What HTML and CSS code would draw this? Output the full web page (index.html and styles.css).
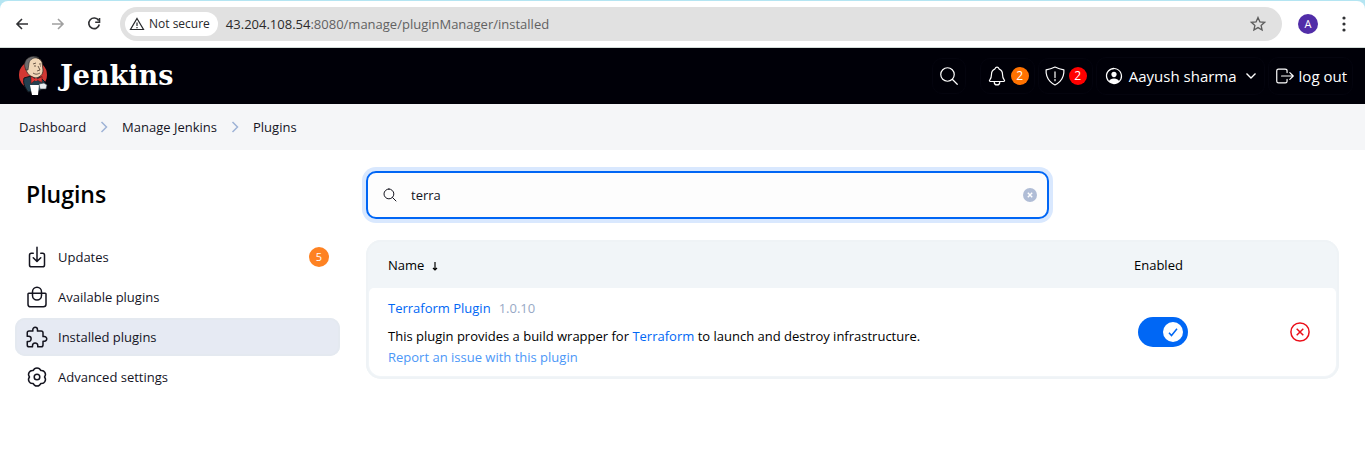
FILE: index.html
```html
<!DOCTYPE html>
<html lang="en">
<head>
<meta charset="utf-8">
<title>Plugins - Jenkins</title>
<link rel="stylesheet" href="styles.css">
</head>
<body>
<div class="browser">
  <div class="toolbar">
    <button class="nav-btn" aria-label="Back"><svg viewBox="0 0 16 16"><path d="M14 8H3M8 3L3 8l5 5"/></svg></button>
    <button class="nav-btn nav-off" aria-label="Forward"><svg viewBox="0 0 16 16"><path d="M2 8h11M8 3l5 5-5 5"/></svg></button>
    <button class="nav-btn" aria-label="Reload"><svg viewBox="0 0 16 16"><path d="M12.600 4.500A5.300 5.300 0 1 0 13.300 8.500M13.500 2v4.300H9.200"/></svg></button>
    <div class="address">
      <button class="secure"><svg viewBox="0 0 16 16"><path d="M8 2.500L14.500 13.500h-13zM8 6.500v3.500M8 11v1.300"/></svg>Not secure</button>
      <div class="url" role="textbox" aria-label="Address" contenteditable="true" spellcheck="false"><span class="host">43.204.108.54</span>:8080/manage/pluginManager/installed</div>
      <button class="star" aria-label="Bookmark"><svg viewBox="0 0 16 16"><path d="M8 1.500l1.900 4.300 4.700.5-3.500 3.100 1 4.600L8 11.600 3.900 14l1-4.600L1.400 6.300l4.700-.5z"/></svg></button>
    </div>
    <button class="profile" aria-label="Profile">A</button>
    <button class="more" aria-label="Browser menu"><svg viewBox="0 0 4 16"><circle cx="2" cy="2" r="1.600"/><circle cx="2" cy="8" r="1.600"/><circle cx="2" cy="14" r="1.600"/></svg></button>
  </div>
</div>

<header class="header">
  <a class="brand" href="#">
    <svg class="butler" viewBox="0 0 30 40">
      <ellipse cx="15" cy="19" rx="14" ry="14" fill="#d33833"/>
      <path d="M6 22l7-2 9 1 5 5-1 6-5 3-11 1-3-5c-1-3-2-5-1-9z" fill="#24404f" stroke="#10141a"/>
      <path d="M8 5c3-5 13-5 16 1l1 8c0 5-3 7-7 8-5-1-8-3-10-8z" fill="#f0d6b7" stroke="#33271f" stroke-width=".8"/>
      <path d="M8 14c-2-4-2-8 1-11 4-4 10-3 12-1-5-1-9 1-10 5l-1 7z" fill="#6d6b6d" stroke="#252525" stroke-width=".6"/>
      <path d="M15 8l3-1M21 8l2 0M16 10h2M22 10h1M20 10l2 4-3 1M15 17c3 2 5 1 7 0" fill="none" stroke="#49372c" stroke-width=".8"/>
      <path d="M13 20l5 3.500-5 4zM18 23.500l6-3v6z" fill="#e13935" stroke="#50191b" stroke-width=".6"/>
      <circle cx="18" cy="23.500" r="1.500" fill="#e13935"/>
      <path d="M12 29h9l-1 10h-6z" fill="#fff"/>
      <path d="M21 28l5-1 3 2-1 4h-6z" fill="#e9edf0" stroke="#35414a" stroke-width=".6"/>
    </svg>
    <span>Jenkins</span>
  </a>
  <button class="head-btn head-search" aria-label="Search"><svg class="icon line" viewBox="0 0 512 512"><path d="M221.090 64a157.090 157.090 0 1 0 157.090 157.090A157.100 157.100 0 0 0 221.090 64zM338.290 338.290L448 448"/></svg></button>
  <button class="head-btn" aria-label="Notifications: 2"><svg class="icon line" viewBox="0 0 512 512"><path d="M427.680 351.430C402 320 383.870 304 383.870 217.350 383.870 138 343.350 109.730 310 96c-4.430-1.820-8.600-6-9.950-10.550C294.200 65.540 277.800 48 256 48s-38.210 17.550-44 37.470c-1.350 4.600-5.520 8.710-9.950 10.530-33.390 13.750-73.870 41.920-73.870 121.350C128.130 304 110 320 84.320 351.430 73.680 364.450 83 384 101.610 384h308.880c18.510 0 27.770-19.610 17.190-32.570zM320 384v16a64 64 0 0 1-128 0v-16"/></svg><span class="count orange">2</span></button>
  <button class="head-btn" aria-label="Security warnings: 2"><svg class="icon line" viewBox="0 0 512 512"><path d="M463.100 112.370C373.680 96.330 336.710 84.450 256 48c-80.710 36.450-117.680 48.330-207.100 64.370C32.700 369.130 240.580 457.790 256 464c15.420-6.210 223.300-94.870 207.100-351.630zM256 160v130M256 335v30"/></svg><span class="count red">2</span></button>
  <a class="head-btn user" href="#"><svg class="icon solid" viewBox="0 0 512 512"><path d="M258.900 48C141.920 46.420 46.420 141.920 48 258.900c1.560 112.190 92.910 203.540 205.100 205.100 117 1.600 212.480-93.900 210.880-210.880C462.440 140.910 371.090 49.560 258.900 48zM385.320 375.250a4 4 0 0 1-6.140-.32 124.270 124.270 0 0 0-32.350-29.590C321.370 329 289.110 320 256 320s-65.370 9-90.830 25.340a124.240 124.240 0 0 0-32.350 29.580 4 4 0 0 1-6.140.32A175.320 175.320 0 0 1 80 259c-1.630-97.310 78.220-178.760 175.570-179S432 158.810 432 256a175.320 175.320 0 0 1-46.680 119.250z"/><path d="M256 144c-19.720 0-37.550 7.390-50.220 20.820s-19 32-17.570 51.930C191.110 256 221.520 288 256 288s64.830-32 67.790-71.240c1.480-19.740-4.800-38.140-17.680-51.820C293.390 151.440 275.590 144 256 144z"/></svg>Aayush sharma<svg class="chev" viewBox="0 0 12 12"><path d="M1.500 3.500L6 8l4.500-4.500"/></svg></a>
  <a class="head-btn logout" href="#"><svg class="icon line" viewBox="0 0 512 512"><path d="M304 336v40a40 40 0 0 1-40 40H104a40 40 0 0 1-40-40V136a40 40 0 0 1 40-40h152c22.090 0 48 17.910 48 40v40M368 336l80-80-80-80M176 256h256"/></svg>log out</a>
</header>

<nav class="crumbs" aria-label="Breadcrumb">
  <a href="#">Dashboard</a>
  <svg viewBox="0 0 8 12"><path d="M1.500 1l5 5-5 5"/></svg>
  <a href="#">Manage Jenkins</a>
  <svg viewBox="0 0 8 12"><path d="M1.500 1l5 5-5 5"/></svg>
  <a href="#">Plugins</a>
</nav>

<div class="page">
  <aside class="side">
    <h1>Plugins</h1>
    <nav class="tasks" aria-label="Plugins">
      <a class="task" href="#"><svg class="icon line" viewBox="0 0 512 512"><path d="M336 176h40a40 40 0 0 1 40 40v208a40 40 0 0 1-40 40H136a40 40 0 0 1-40-40V216a40 40 0 0 1 40-40h40M176 272l80 80 80-80M256 48v288"/></svg><span>Updates</span><span class="updates">5</span></a>
      <a class="task" href="#"><svg class="icon line" viewBox="0 0 512 512"><path d="M80 176a16 16 0 0 0-16 16v216c0 30.240 25.760 56 56 56h272c30.240 0 56-24.510 56-54.750V192a16 16 0 0 0-16-16zM160 176v-32a96 96 0 0 1 192 0v32M160 176v48a96 96 0 0 0 192 0v-48"/></svg><span>Available plugins</span></a>
      <a class="task active" href="#" aria-current="page"><svg class="icon line" viewBox="0 0 512 512"><path d="M413.660 246.100H386a2 2 0 0 1-2-2v-77.240A38.860 38.860 0 0 0 345.140 128H267.900a2 2 0 0 1-2-2V98.340c0-27.140-21.500-49.860-48.640-50.330a49.530 49.530 0 0 0-50.400 49.510V126a2 2 0 0 1-2 2H87.620A39.740 39.740 0 0 0 48 167.620V238a2 2 0 0 0 2 2h26.910c29.370 0 53.680 25.480 54.090 54.850.42 29.870-23.510 57.150-53.290 57.150H50a2 2 0 0 0-2 2v70.380A39.740 39.740 0 0 0 87.620 464H158a2 2 0 0 0 2-2v-20.930c0-30.280 24.750-56.350 55-57.060 30.100-.7 57 20.310 57 50.280V462a2 2 0 0 0 2 2h71.140A38.860 38.860 0 0 0 384 425.140v-78a2 2 0 0 1 2-2h28.480c27.630 0 49.520-22.670 49.520-50.400s-23.200-48.640-50.340-48.640z"/></svg><span>Installed plugins</span></a>
      <a class="task" href="#"><svg class="icon gear" viewBox="-2 -2 24 24"><path d="M6.250 3.500A4 4 0 0 1 13.750 3.500A4 4 0 0 1 17.500 10A4 4 0 0 1 13.750 16.500A4 4 0 0 1 6.250 16.500A4 4 0 0 1 2.500 10A4 4 0 0 1 6.250 3.500z"/><circle cx="10" cy="10" r="2.800"/></svg><span>Advanced settings</span></a>
    </nav>
  </aside>

  <main class="content">
    <label class="search">
      <svg class="icon line" viewBox="0 0 512 512"><path d="M221.090 64a157.090 157.090 0 1 0 157.090 157.090A157.100 157.100 0 0 0 221.090 64zM338.290 338.290L448 448"/></svg>
      <input type="text" value="terra" aria-label="Search installed plugins">
      <button class="clear" aria-label="Clear"><svg viewBox="0 0 14 14"><circle cx="7" cy="7" r="7"/><path d="M4.800 4.800l4.400 4.400M9.200 4.800L4.800 9.200"/></svg></button>
    </label>

    <div class="table-box">
      <table class="plugins">
        <thead>
          <tr><th class="name">Name<svg class="sort" viewBox="0 0 8 12"><path d="M4 2v8M2 8L4 10 6 8"/></svg></th><th class="enabled">Enabled</th><th class="remove"></th></tr>
        </thead>
        <tbody>
          <tr>
            <td class="name">
              <div class="title"><a href="#">Terraform Plugin</a><span class="version">1.0.10</span></div>
              <div class="desc">This plugin provides a build wrapper for <a href="#">Terraform</a> to launch and destroy infrastructure.</div>
              <a class="report" href="#">Report an issue with this plugin</a>
            </td>
            <td class="enabled"><label class="toggle"><input type="checkbox" checked aria-label="Terraform Plugin enabled"><svg viewBox="0 0 20 20"><circle cx="10" cy="10" r="10"/><path d="M6 10.800l2.500 2.700L14 6.800"/></svg></label></td>
            <td class="remove"><button class="uninstall" aria-label="Uninstall Terraform Plugin"><svg viewBox="0 0 20 20"><circle cx="10" cy="10" r="9.100"/><path d="M6.700 6.700l6.600 6.600M13.300 6.700l-6.600 6.600"/></svg></button></td>
          </tr>
        </tbody>
      </table>
    </div>
  </main>
</div>
</body>
</html>
```
FILE: styles.css
```css
* { box-sizing: border-box; }
body { margin: 0; background: #fff; color: #14141f; font: 13px/20px "Open Sans", "Noto Sans", sans-serif; }
a { color: inherit; text-decoration: none; }
button { display: flex; align-items: center; justify-content: center; margin: 0; padding: 0; border: 0; background: none; color: inherit; font: inherit; cursor: pointer; }
svg { display: block; flex: none; }
.icon { width: 24px; height: 24px; }
.line { fill: none; stroke: currentColor; stroke-width: 32; stroke-linecap: round; stroke-linejoin: round; }
.solid { fill: currentColor; }

.browser { padding-top: 1px; background: #b4e5f2; }
.toolbar { display: flex; align-items: center; height: 47px; padding: 0 19px 0 14px; border-bottom: 1px solid #d3dcd8; border-radius: 8px 8px 0 0; background: #fff; color: #303134; }
.nav-btn { width: 16px; height: 16px; margin-right: 20px; }
.nav-btn svg, .secure svg, .star svg { width: 16px; height: 16px; fill: none; stroke: currentColor; stroke-width: 1.600; }
.nav-off { color: #a0a0a0; }
.address { display: flex; flex: 1; align-items: center; height: 34px; margin-left: -2px; padding: 0 16px 0 5px; border-radius: 17px; background: #e1e1e1; }
.secure { gap: 4px; height: 24px; padding: 0 8px 0 4px; border-radius: 12px; background: #fff; color: #27282b; font-size: 12px; font-weight: 500; }
.secure svg { stroke-width: 1.200; }
.url { flex: 1; margin-left: 8px; outline: 0; color: #616161; }
.host { color: #2b2b2b; }
.star svg { stroke: #5d5d5d; stroke-width: 1.300; }
.profile { width: 20px; height: 20px; margin: 0 24px 0 16px; border-radius: 50%; background: #512da8; color: #fff; font-size: 11px; }
.more svg { width: 4px; height: 16px; fill: #303134; }

.header { display: flex; align-items: center; height: 56px; padding: 0 12px 0 18px; background: #000008; color: #fff; }
.brand { display: flex; align-items: center; gap: 12px; margin-right: auto; font: bold 27px/40px "DejaVu Serif", serif; }
.butler { width: 30px; height: 40px; }
.head-btn { display: flex; align-items: center; gap: 3px; height: 36px; margin-left: 3px; padding: 0 5px; border: 1px solid #04040e; border-radius: 10px; }
.head-btn .icon { width: 22px; height: 22px; }
.head-btn .line { stroke-width: 28; }
.head-search { margin-right: 11px; }
.user, .logout { height: 38px; font-size: 15px; }
.user { gap: 5px; padding: 0 7px; }
.user .solid { width: 20px; height: 20px; }
.count { width: 18px; border-radius: 50%; font-size: 12px; line-height: 18px; text-align: center; }
.orange { background: #ff7200; }
.red { background: #f00; }
.chev { width: 12px; height: 12px; margin-left: 3px; fill: none; stroke: #fff; stroke-width: 1.400; }

.crumbs { display: flex; align-items: center; gap: 14px; height: 46px; padding: 0 19px; background: #f5f6f8; }
.crumbs svg { width: 8px; height: 12px; fill: none; stroke: #9fb3d6; stroke-width: 1.500; }

.page { display: grid; grid-template-columns: 325px 1fr; gap: 26px; padding: 21px 26px 24px 15px; }
.side h1 { margin: 0 0 21px 11px; font-size: 23px; line-height: 46px; font-weight: 600; color: #000; }
.tasks { display: grid; gap: 2px; }
.task { display: flex; align-items: center; gap: 9px; height: 38px; padding: 0 11px 0 10px; border-radius: 10px; }
.active { background: #e6eaf3; box-shadow: inset 0 0 0 2px #e4e9f0; }
.gear { fill: none; stroke: currentColor; stroke-width: 1.500; stroke-linejoin: round; }
.updates { width: 20px; margin-left: auto; border-radius: 50%; background: #fe8222; color: #fff; font-size: 11px; text-align: center; }

.search { display: flex; align-items: center; width: 100%; max-width: 683px; height: 48px; padding: 0 10px 0 14px; border: 2px solid #0066f5; border-radius: 10px; background: #fdfdfd; box-shadow: 0 0 0 4px #d9e8fe; }
.search .icon { width: 16px; height: 16px; }
.search input { flex: 1; min-width: 0; margin-left: 13px; padding: 0; border: 0; outline: 0; background: none; color: inherit; font: inherit; }
.clear svg { width: 14px; height: 14px; fill: #b0bdd6; stroke: #fff; stroke-width: 1.400; }
.clear circle { stroke: none; }

.table-box { margin-top: 21px; padding: 3px; border-radius: 15px; background: #f1f5f8; box-shadow: inset 0 0 0 2px #eff3f6; }
.plugins { width: 100%; border-collapse: separate; border-spacing: 0; color: #000; }
.plugins th { height: 45px; padding: 0 0 2px 19px; font-weight: 400; text-align: left; }
.plugins td { height: 87px; padding: 10px 0 8px 19px; background: #fff; vertical-align: top; }
.plugins td:first-child { border-radius: 5px 0 0 12px; }
.plugins td:last-child { border-radius: 0 5px 12px 0; }
.plugins .enabled { width: 137px; padding-left: 0; }
.plugins .remove { width: 65px; padding-left: 0; }
.plugins td.enabled, .plugins td.remove { padding-bottom: 10px; vertical-align: middle; }
.sort { display: inline-block; width: 8px; height: 12px; margin-left: 7px; vertical-align: -2px; fill: none; stroke: currentColor; stroke-width: 1.200; }
.title, .desc a { color: #0067f5; }
.title { margin-bottom: 8px; }
.version { margin-left: 8px; color: #98a9c6; }
.desc, .report { display: block; line-height: 21px; }
.report { color: #4c97f7; }
.toggle { display: block; position: relative; width: 50px; height: 30px; margin-left: 4px; }
.toggle input { display: block; width: 100%; height: 100%; margin: 0; appearance: none; border-radius: 15px; background: #0067f5; }
.toggle svg { position: absolute; top: 5px; right: 5px; width: 20px; height: 20px; fill: none; stroke: #0067f5; stroke-width: 1.500; pointer-events: none; }
.toggle circle { fill: #fff; stroke: none; }
.uninstall { margin-left: 19px; color: #eb0f19; }
.uninstall svg { width: 20px; height: 20px; fill: none; stroke: currentColor; stroke-width: 1.500; }
```
